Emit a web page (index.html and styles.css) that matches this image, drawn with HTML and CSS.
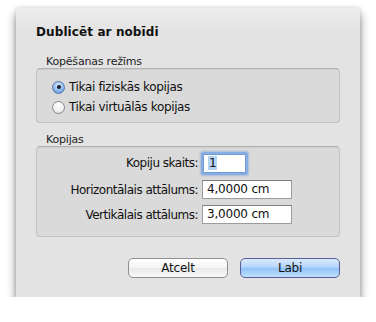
FILE: index.html
```html
<!DOCTYPE html>
<html lang="lv">
<head>
<meta charset="utf-8">
<title>Dublicēt ar nobīdi</title>
<link rel="stylesheet" href="styles.css">
</head>
<body>
<div class="dialog">
  <h1 class="title">Dublicēt ar nobīdi</h1>

  <div class="group-label">Kopēšanas režīms</div>
  <div class="group-box radios">
    <label class="radio"><span class="radio-btn checked"></span><span>Tikai fiziskās kopijas</span></label>
    <label class="radio"><span class="radio-btn"></span><span>Tikai virtuālās kopijas</span></label>
  </div>

  <div class="group-label second">Kopijas</div>
  <div class="group-box fields">
    <span class="field-label">Kopiju skaits:</span>
    <span class="input short focused"><span class="sel">1</span></span>
    <span class="field-label">Horizontālais attālums:</span>
    <span class="input">4,0000 cm</span>
    <span class="field-label">Vertikālais attālums:</span>
    <span class="input">3,0000 cm</span>
  </div>

  <div class="buttons">
    <button class="btn">Atcelt</button>
    <button class="btn primary">Labi</button>
  </div>
</div>
</body>
</html>
```
FILE: styles.css
```css
html, body {
  margin: 0;
  background: #ffffff;
}
body {
  padding: 8px 0 0 16px;
  font-family: "DejaVu Sans", "Liberation Sans", sans-serif;
  color: #111;
}
.dialog {
  width: 344px;
  height: 289px;
  box-sizing: border-box;
  padding: 16px 20px 0 20px;
  background: linear-gradient(#ececec, #e3e3e3 24px);
  box-shadow: 0 6px 9px rgba(0,0,0,0.45), 0 0 4px rgba(0,0,0,0.15);
  display: flex;
  flex-direction: column;
}
.title {
  margin: 0;
  font-size: 12px;
  font-weight: bold;
  line-height: 16px;
  letter-spacing: 0.1px;
}
.group-label {
  margin: 15px 0 0 10px;
  font-size: 11px;
  line-height: 13px;
  letter-spacing: -0.2px;
  color: #222;
}
.group-label.second {
  margin-top: 10px;
}
.group-box {
  border: 1px solid #c2c2c2;
  border-top-color: #b2b2b2;
  border-radius: 4px;
  background: #dadada;
  box-shadow: inset 0 1px 1px rgba(0,0,0,0.06);
}
.radios {
  height: 55px;
  box-sizing: border-box;
  padding: 9px 0 0 15px;
  display: flex;
  flex-direction: column;
  gap: 2px;
}
.radio {
  display: flex;
  align-items: center;
  gap: 4px;
  height: 18px;
  font-size: 12px;
  letter-spacing: -0.35px;
}
.radio-btn {
  width: 13px;
  height: 13px;
  box-sizing: border-box;
  border-radius: 50%;
  border: 1px solid #8a8a8a;
  background: radial-gradient(circle at 50% 30%, #ffffff, #f2f2f2 50%, #d6d6d6);
  position: relative;
  flex: none;
}
.radio-btn.checked {
  border-color: #5a77a8;
  background: radial-gradient(circle at 50% 30%, #d6e8fb, #8fbaf0 55%, #4f8fdc);
}
.radio-btn.checked::after {
  content: "";
  position: absolute;
  left: 3.5px;
  top: 3.5px;
  width: 4px;
  height: 4px;
  border-radius: 50%;
  background: #1a1a2a;
}
.fields {
  height: 91px;
  box-sizing: border-box;
  padding-top: 8px;
  display: grid;
  grid-template-columns: 161px 1fr;
  column-gap: 4px;
  grid-auto-rows: 19px;
  row-gap: 6px;
  align-items: center;
  font-size: 12px;
  letter-spacing: -0.5px;
}
.field-label {
  text-align: right;
}
.field-label:first-child {
  margin-bottom: 3px;
}
.input {
  width: 90px;
  height: 19px;
  box-sizing: border-box;
  border: 1px solid #9c9c9c;
  border-top-color: #7f7f7f;
  background: #fff;
  padding: 0 4px;
  line-height: 17px;
  letter-spacing: -0.2px;
}
.input.short {
  width: 43px;
  margin-left: 1px;
  margin-bottom: 3px;
}
.input.focused {
  border-color: #6f9bd6;
  box-shadow: 0 0 0 2px #87aee2, 0 0 2px 3px rgba(120,160,220,0.5);
  border-radius: 1px;
}
.sel {
  background: #b5d3f5;
  padding: 0 1px;
}
.buttons {
  margin-top: 21px;
  display: flex;
  justify-content: flex-end;
  gap: 12px;
}
.btn {
  width: 100px;
  height: 20px;
  border: 1px solid #8f8f8f;
  border-radius: 5px;
  background: linear-gradient(#ffffff, #f4f4f4 50%, #e8e8e8 51%, #fafafa);
  font-family: "DejaVu Sans", "Liberation Sans", sans-serif;
  font-size: 12px;
  letter-spacing: -0.2px;
  color: #111;
  padding: 0;
  line-height: 18px;
}
.btn.primary {
  border-color: #5b5e9a;
  background: linear-gradient(#dbeafc, #b5d5fb 45%, #93c3f8 52%, #bfe1fe);
}
```
